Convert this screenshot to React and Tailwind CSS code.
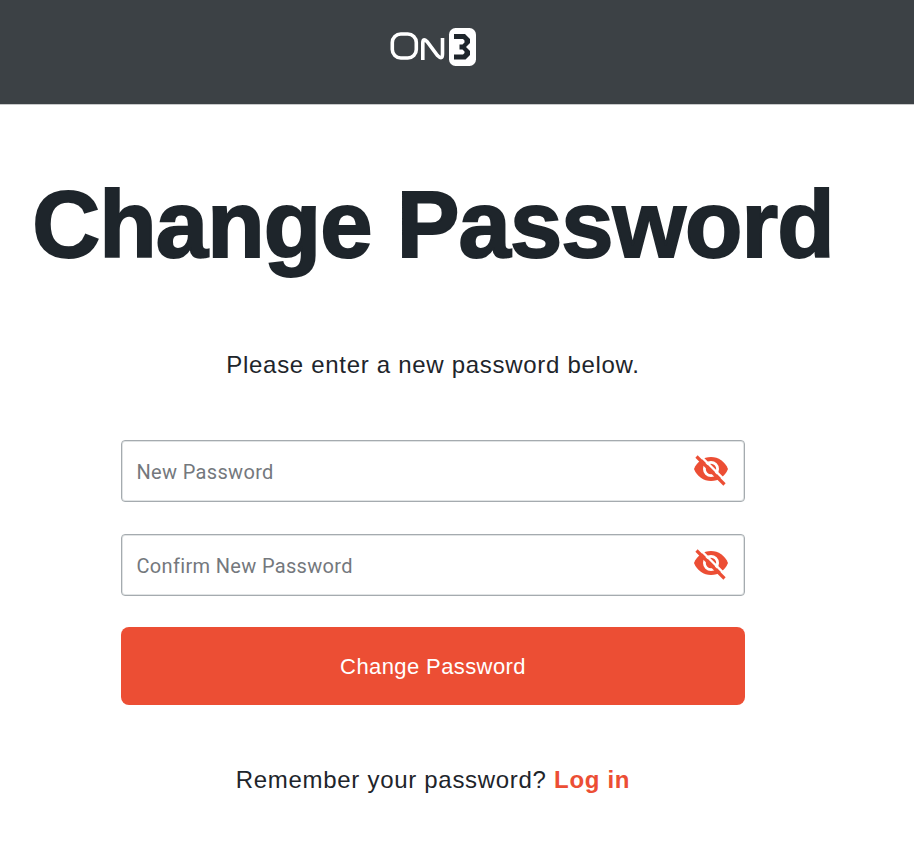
import { useState } from 'react'

const fields = [
  { name: 'password', placeholder: 'New Password' },
  { name: 'confirmPassword', placeholder: 'Confirm New Password' },
]

function Logo() {
  return (
    <svg viewBox="0 0 86 38" className="h-[38px] w-[86px]" fill="none">
      <rect x="2.3" y="6" width="24" height="24" rx="8.5" stroke="#fff" strokeWidth="3.6" />
      <path d="M32.8 32V15Q32.8 9.5 37 13.5L47.5 27.5Q52.5 32.5 52.5 26V10" stroke="#fff" strokeWidth="3.6" />
      <rect x="59" y="0" width="27" height="38" rx="6.5" fill="#fff" />
      <path
        d="M64 6H75L80 11V15L76 19L80 23V27L75.5 31.5H64V26.5H73L74.5 25V23.5L72.5 21.5H69.5V16.5H72.5L74.5 14.5V12.5L73 11H64Z"
        fill="#1e252b"
      />
    </svg>
  )
}

function EyeOff() {
  return (
    <svg viewBox="0 0 34 31" className="h-[31px] w-[34px]" fill="none">
      <path d="M0 14C3 6.5 9.5 2 17 2S31 6.5 34 14C31 21.5 24.5 26 17 26S3 21.5 0 14Z" fill="#ec4e34" />
      <circle cx="17" cy="14" r="6.6" stroke="#fff" strokeWidth="2.8" />
      <path d="M5 -0.5L34 28.5" stroke="#fff" strokeWidth="2.4" />
      <path d="M2.5 1.5L30.5 29.5" stroke="#ec4e34" strokeWidth="3.2" />
    </svg>
  )
}

function PasswordField({ name, placeholder }) {
  const [visible, setVisible] = useState(false)

  return (
    <div className="flex h-[62px] items-center rounded border border-[#a5abaf] pl-[14.5px] pr-4 shadow-[inset_0_0_0_1px_#e1e4e5]">
      <input
        name={name}
        type={visible ? 'text' : 'password'}
        placeholder={placeholder}
        className="min-w-0 flex-1 pt-0.5 font-[Roboto,sans-serif] text-[20px] tracking-[0.33px] text-[#1e252b] outline-none placeholder:text-[#74787d]"
      />
      <button
        type="button"
        aria-label="Toggle password visibility"
        className="mb-px"
        onClick={() => setVisible(!visible)}
      >
        <EyeOff />
      </button>
    </div>
  )
}

export default function App() {
  return (
    <div className="min-h-screen bg-white font-['Liberation_Sans',Arial,sans-serif] text-[#1e252b]">
      <header className="flex h-[105px] justify-center border-b border-[#c8c9ca] bg-[#3c4145] pr-12 pt-7">
        <Logo />
      </header>

      <main className="flex w-[866px] flex-col items-center pt-[60px]">
        <h1 className="whitespace-nowrap text-[94px] font-bold leading-[120px] tracking-[-0.9px] [-webkit-text-stroke:2px_#1e252b]">
          Change Password
        </h1>
        <p className="mt-[62px] whitespace-nowrap text-2xl leading-9 tracking-[0.7px]">Please enter a new password below.</p>

        <form className="mt-[57px] flex w-[624px] flex-col gap-8" onSubmit={(e) => e.preventDefault()}>
          {fields.map((field) => (
            <PasswordField key={field.name} {...field} />
          ))}
          <button className="-mt-[0.6px] h-[78px] rounded-lg bg-[#ec4e34] text-[22px] tracking-[0.4px] text-white">
            Change Password
          </button>
        </form>

        <p className="mt-[57px] whitespace-nowrap text-2xl leading-9 tracking-[0.7px]">
          Remember your password? <a href="#" className="font-bold text-[#ec4e34]">Log in</a>
        </p>
      </main>
    </div>
  )
}
